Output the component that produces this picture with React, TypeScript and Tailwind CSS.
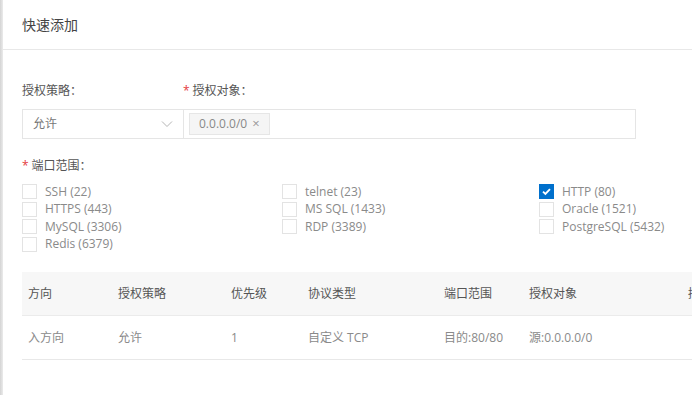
import React from "react";

const font = { fontFamily: '"Open Sans", "Noto Sans CJK SC", sans-serif' };

function Box({ checked, label }: { checked?: boolean; label: string }) {
  return (
    <div className="flex items-center h-[17.5px]">
      {checked ? (
        <div className="w-[15px] h-[15px] bg-[#0070cc] flex items-center justify-center">
          <svg width="11" height="11" viewBox="0 0 12 12">
            <path d="M2.2 6.2 L4.8 8.7 L9.8 3.4" stroke="#fff" strokeWidth="2" fill="none" />
          </svg>
        </div>
      ) : (
        <div className="w-[15px] h-[15px] border border-[#e3e3e3] bg-white" />
      )}
      <span className="ml-[8px] text-[12px] text-[#8a8a8a] leading-none">{label}</span>
    </div>
  );
}

export default function App() {
  const cols: [string, number][] = [
    ["方向", 90],
    ["授权策略", 113],
    ["优先级", 77],
    ["协议类型", 136],
    ["端口范围", 85],
    ["授权对象", 159],
    ["描述", 100],
  ];
  const row = ["入方向", "允许", "1", "自定义 TCP", "目的:80/80", "源:0.0.0.0/0", ""];
  return (
    <div className="w-[692px] h-[395px] overflow-hidden bg-white flex" style={font}>
      <div className="w-[3px] shrink-0 bg-gradient-to-r from-[#d4d4d4] to-[#ebebeb]" />
      <div className="flex-1 flex flex-col min-w-0">
        <div className="h-[50px] shrink-0 flex items-center pl-[19px] border-b border-[#e8e8e8] text-[14px] text-[#444]">
          快速添加
        </div>
        <div className="pl-[19px]">
          <div className="flex mt-[32px] h-[18px] items-center text-[12px] text-[#555]">
            <div className="w-[161px]">授权策略：</div>
            <div className="flex items-center">
              <span className="text-[#e4393c] mr-[3px]">*</span>授权对象：
            </div>
          </div>
          <div className="flex mt-[9px] h-[30px]">
            <div className="w-[162px] border border-[#e5e5e5] flex items-center justify-between pl-[10px] pr-[10px] text-[12px] text-[#777]">
              <span>允许</span>
              <svg width="12" height="8" viewBox="0 0 12 8">
                <path d="M1 1.5 L6 6.5 L11 1.5" stroke="#b5b5b5" strokeWidth="1" fill="none" />
              </svg>
            </div>
            <div className="w-[453px] -ml-px border border-[#e5e5e5] flex items-center pl-[5px]">
              <div className="h-[22px] px-[9px] bg-[#f5f5f5] border border-[#e6e6e6] flex items-center text-[12px] text-[#888]">
                0.0.0.0/0
                <span className="ml-[5px] text-[13px] text-[#999]">×</span>
              </div>
            </div>
          </div>
          <div className="flex mt-[18px] h-[18px] items-center text-[12px] text-[#555]">
            <span className="text-[#e4393c] mr-[3px]">*</span>端口范围：
          </div>
          <div className="mt-[8px] flex">
            <div className="w-[260px] flex flex-col">
              <Box label="SSH (22)" />
              <Box label="HTTPS (443)" />
              <Box label="MySQL (3306)" />
              <Box label="Redis (6379)" />
            </div>
            <div className="w-[257px] flex flex-col">
              <Box label="telnet (23)" />
              <Box label="MS SQL (1433)" />
              <Box label="RDP (3389)" />
            </div>
            <div className="flex flex-col">
              <Box checked label="HTTP (80)" />
              <Box label="Oracle (1521)" />
              <Box label="PostgreSQL (5432)" />
            </div>
          </div>
          <div className="mt-[19px] w-[800px]">
            <div className="flex h-[44px] items-center bg-[#f7f7f7] border-b border-[#ebebeb] text-[12px] text-[#555]">
              {cols.map(([c, w]) => (
                <div key={c} className="pl-[6px] shrink-0" style={{ width: w }}>
                  {c}
                </div>
              ))}
            </div>
            <div className="flex h-[44px] items-center border-b border-[#e8e8e8] text-[12px] text-[#8a8a8a]">
              {row.map((c, i) => (
                <div key={i} className="pl-[6px] shrink-0" style={{ width: cols[i][1] }}>
                  {c}
                </div>
              ))}
            </div>
          </div>
        </div>
      </div>
    </div>
  );
}
